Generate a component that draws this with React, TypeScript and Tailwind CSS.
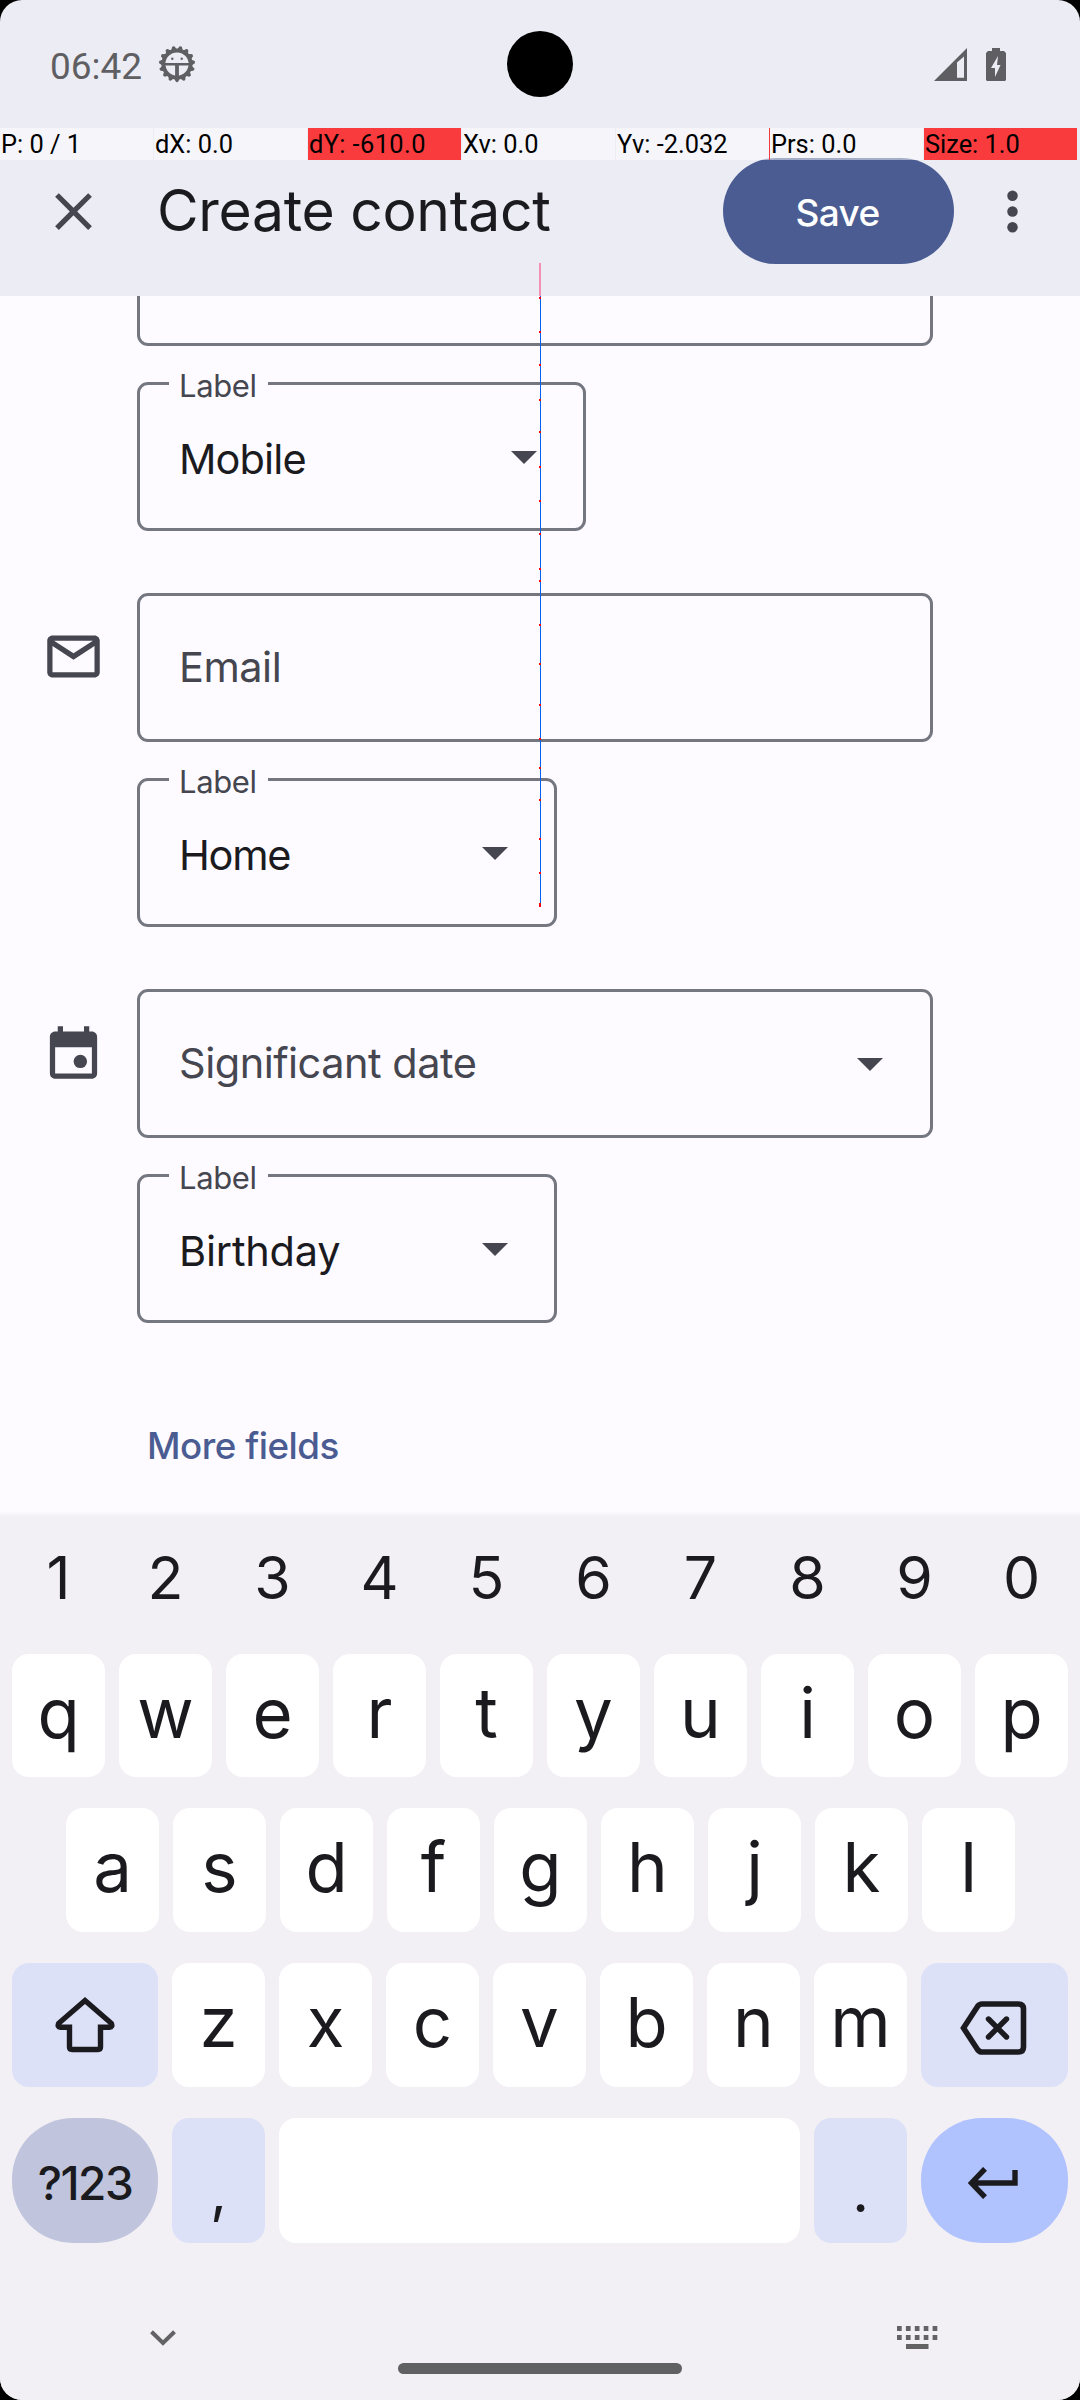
import type { ReactNode } from "react";

const pointerCells: { text: string; style: string }[] = [
  { text: "P: 0 / 1", style: "bg-white/50" },
  { text: "dX: 0.0", style: "bg-white/50" },
  { text: "dY: -610.0", style: "bg-[#ff0000]/75 tracking-[0.4px]" },
  { text: "Xv: 0.0", style: "bg-white/50" },
  { text: "Yv: -2.032", style: "bg-white/50" },
  { text: "Prs: 0.0", style: "bg-white/50" },
  { text: "Size: 1.0", style: "bg-[#ff0000]/75" },
];

const touchSamples = [
  297, 331, 364, 399, 431, 466, 500, 533, 568, 580, 624, 663, 704, 738, 767, 799, 838, 872,
];

function BugIcon() {
  const teeth = Array.from({ length: 15 }, (_, i) => i * 24 + 12);
  return (
    <svg className="h-[38px] w-[38px]" viewBox="-19 -19 38 38">
      <circle r="13.6" fill="none" stroke="#5f5f63" strokeWidth="4" />
      {teeth.map((a) => (
        <path
          key={a}
          d="M-2.8 -14.5 L-1.3 -17.6 Q0 -18.8 1.3 -17.6 L2.8 -14.5Z"
          fill="#5f5f63"
          transform={`rotate(${a})`}
        />
      ))}
      <path d="M-12.5 0.2H12.5" stroke="#5f5f63" strokeWidth="2.6" />
      <path d="M0 0V13" stroke="#5f5f63" strokeWidth="3.8" />
      <circle cx="-4.7" cy="-5.2" r="1.2" fill="#5f5f63" />
      <circle cx="4.7" cy="-5.2" r="1.2" fill="#5f5f63" />
    </svg>
  );
}

function StatusBar() {
  return (
    <div className="relative flex h-[128px] items-center pl-[50px] pr-[74px]">
      <span className="pt-[5px] font-['Roboto',sans-serif] text-[37px] leading-[44px] text-[#5f5f63]">06:42</span>
      <div className="ml-[16px]">
        <BugIcon />
      </div>
      <svg className="ml-auto h-[33px] w-[33px]" viewBox="0 0 33 33">
        <path fillRule="evenodd" d="M0 33L33 0V33ZM23 14.5V29.8H30V8.5Z" fill="#5f5f63" />
      </svg>
      <svg className="ml-[19px] h-[33px] w-[20px]" viewBox="0 0 20 33">
        <path
          fillRule="evenodd"
          d="M6 0h8v3h4l2 2v27l-1 1H1l-1-1V5l2-2h4ZM12 8L5 20h4v9L14.5 17H11Z"
          fill="#5f5f63"
        />
      </svg>
      <div className="absolute left-[507px] top-[31px] h-[66px] w-[66px] rounded-full bg-black" />
    </div>
  );
}

function PointerBar() {
  return (
    <div className="relative z-10 flex h-[32px] gap-px">
      {pointerCells.map((c, i) => (
        <div
          key={c.text}
          className={`relative w-[153px] pl-px font-['Roboto',sans-serif] text-[25.4px] leading-[32px] whitespace-nowrap text-black ${c.style}`}
        >
          {c.text}
          {i === 5 && <span className="absolute -left-px top-0 h-full w-px bg-[#f03a3c]" />}
        </div>
      ))}
    </div>
  );
}

function AppBar() {
  return (
    <div className="flex h-[136px] items-center pb-[34px] pl-[42px] pr-[36px]">
      <svg className="h-[63px] w-[63px] shrink-0" viewBox="0 0 24 24" fill="#45464f">
        <path d="M19 6.41L17.59 5 12 10.59 6.41 5 5 6.41 10.59 12 5 17.59 6.41 19 12 13.41 17.59 19 19 17.59 13.41 12z" />
      </svg>
      <h1 className="ml-[52px] text-[57px] leading-[64px] tracking-[-0.3px] text-[#1b1b1f]">Create contact</h1>
      <button className="ml-auto mr-[27px] flex h-[106px] w-[231px] shrink-0 items-center justify-center rounded-full bg-[#4a5c92] pr-[2px] pt-[4px] text-[37px] font-medium tracking-[-0.6px] text-white">
        Save
      </button>
      <svg className="h-[63px] w-[63px] shrink-0" viewBox="0 0 24 24" fill="#45464f">
        <circle cx="12" cy="6" r="2" />
        <circle cx="12" cy="12" r="2" />
        <circle cx="12" cy="18" r="2" />
      </svg>
    </div>
  );
}

function Arrow() {
  return (
    <svg className="mt-[2px] h-[13px] w-[26px]" viewBox="0 0 26 13">
      <path d="M0 0H26L13 13Z" fill="#45464f" />
    </svg>
  );
}

function Field({ text, arrow }: { text: string; arrow?: boolean }) {
  return (
    <div className="flex h-[149px] w-[796px] items-center justify-between rounded-[11px] border-[3px] border-[#757780] pl-[39px] pr-[47px]">
      <span className="text-[41.5px] tracking-[-0.5px] text-[#45464f]">{text}</span>
      {arrow && <Arrow />}
    </div>
  );
}

function LabelSelect({ value, width, tracking }: { value: string; width: string; tracking: string }) {
  return (
    <div
      className={`relative mt-[36px] flex h-[149px] items-center justify-between rounded-[11px] border-[3px] border-[#757780] pl-[39px] pr-[46px] ${width}`}
    >
      <span className="absolute -top-[19px] left-[29px] w-[99px] bg-[#fdfbff] pl-[10px] text-[31px] leading-[40px] tracking-[-0.4px] text-[#45464f]">
        Label
      </span>
      <span className={`pt-[6px] text-[41.5px] text-[#1b1b1f] ${tracking}`}>{value}</span>
      <Arrow />
    </div>
  );
}

function Group({ icon, children }: { icon?: ReactNode; children: ReactNode }) {
  return (
    <section className="flex">
      <div className="w-[137px] shrink-0 pl-[42px]">{icon}</div>
      <div>{children}</div>
    </section>
  );
}

function MailIcon() {
  return (
    <svg className="mt-[32px] h-[63px] w-[63px]" viewBox="0 0 24 24" fill="#45464f">
      <path
        fillRule="evenodd"
        d="M4 4H20C21.1 4 22 4.9 22 6V18C22 19.1 21.1 20 20 20H4C2.9 20 2 19.1 2 18V6C2 4.9 2.900 4 4 4ZM4.600 6L12 10.800L19.400 6ZM4 8V18H20V8L12 13.200Z"
      />
    </svg>
  );
}

function EventIcon() {
  return (
    <svg className="mt-[32px] h-[63px] w-[63px]" viewBox="0 0 24 24" fill="#45464f">
      <path
        fillRule="evenodd"
        d="M6 2h2v2h8V2h2v2h1c1.1 0 2 .9 2 2v14c0 1.1-.9 2-2 2H5c-1.1 0-2-.9-2-2V6c0-1.1.9-2 2-2h1ZM5 10v10h14V10Z"
      />
      <circle cx="14.6" cy="15.4" r="2.55" />
    </svg>
  );
}

function Form() {
  return (
    <main className="h-[1215px] bg-[#fdfbff]">
      <Group>
        <div className="h-[50px] w-[796px] rounded-b-[11px] border-[3px] border-t-0 border-[#757780]" />
        <LabelSelect value="Mobile" width="w-[449px]" tracking="tracking-[-0.9px]" />
      </Group>
      <div className="mt-[62px]">
        <Group icon={<MailIcon />}>
          <Field text="Email" />
          <LabelSelect value="Home" width="w-[420px]" tracking="tracking-[-1.3px]" />
        </Group>
      </div>
      <div className="mt-[62px]">
        <Group icon={<EventIcon />}>
          <Field text="Significant date" arrow />
          <LabelSelect value="Birthday" width="w-[420px]" tracking="tracking-[-0.2px]" />
        </Group>
      </div>
      <button className="ml-[147px] mt-[101px] block text-[36.75px] leading-[44px] font-medium tracking-[-0.5px] text-[#4a5c92]">
        More fields
      </button>
    </main>
  );
}

function Key({ children, className = "w-[93px] bg-white pb-[3px]" }: { children?: ReactNode; className?: string }) {
  return (
    <div className={`flex h-full shrink-0 items-center justify-center rounded-[17px] text-[69px] ${className}`}>
      {children}
    </div>
  );
}

function Keyboard() {
  return (
    <div className="bg-[#f2f0f5] text-[#1b1b1f]">
      <div className="h-[6px] bg-linear-to-b from-[#fdfbff] to-[#f2f0f5]" />
      <div className="flex h-[137px] items-center gap-[14px] px-[12px] pb-[14px]">
        {[..."1234567890"].map((d) => (
          <span key={d} className="w-[93px] text-center text-[59px]">{d}</span>
        ))}
      </div>
      <div className="flex flex-col gap-[31px] px-[12px]">
        <div className="flex h-[123px] gap-[14px]">
          {[..."qwertyuiop"].map((k) => <Key key={k}>{k}</Key>)}
        </div>
        <div className="flex h-[124px] gap-[14px] pl-[54px]">
          {[..."asdfghjkl"].map((k) => <Key key={k} className="w-[93px] bg-white pb-[4px]">{k}</Key>)}
        </div>
        <div className="flex h-[124px] gap-[14px]">
          <Key className="w-[146px] bg-[#dde1f8]">
            <svg className="h-[58px] w-[60px]" viewBox="0 0 60 58">
              <path
                d="M30 4.5L56.3 27.3Q58 31.2 54.5 31.2H45.5V51Q45.5 53.5 43 53.5H17Q14.500 53.500 14.500 51V31.200H5.500Q2 31.200 3.700 27.300Z"
                fill="none"
                stroke="#1b1b1f"
                strokeWidth="5.4"
                strokeLinejoin="miter"
              />
            </svg>
          </Key>
          {[..."zxcvbnm"].map((k) => <Key key={k} className="w-[93px] bg-white pb-[4px]">{k}</Key>)}
          <Key className="w-[147px] bg-[#dde1f8] pr-[2px] pt-[5px]">
            <svg className="h-[54px] w-[67px]" viewBox="0 0 67 54">
              <path
                d="M3.500 27L17.500 5.500Q19.300 3 22 3H58.500Q63.500 3 63.500 8V46Q63.500 51 58.500 51H22Q19.300 51 17.500 48.500Z"
                fill="none"
                stroke="#1b1b1f"
                strokeWidth="5.600"
              />
              <path d="M28.500 18L46.500 36M46.500 18L28.500 36" stroke="#1b1b1f" strokeWidth="5.400" strokeLinecap="round" />
            </svg>
          </Key>
        </div>
        <div className="flex h-[125px] gap-[14px]">
          <div className="flex w-[146px] shrink-0 items-center justify-center rounded-[61px] bg-[#c0c5dd] pt-[5px] text-[46px] font-medium tracking-[-1.500px]">
            ?123
          </div>
          <div className="flex w-[93px] shrink-0 items-center justify-center rounded-[17px] bg-[#dde1f8] pt-[22px] text-[58px]">,</div>
          <div className="w-[521px] shrink-0 rounded-[17px] bg-white" />
          <div className="flex w-[93px] shrink-0 items-center justify-center rounded-[17px] bg-[#dde1f8] pt-[22px] text-[58px]">.</div>
          <div className="flex w-[147px] shrink-0 items-center justify-center rounded-[61px] bg-[#b1c3fe] pr-[3px] pt-[5px]">
            <svg className="h-[32px] w-[50px]" viewBox="0 0 50 32">
              <path d="M47 3V16H4M17 1.800L3.500 16L17 30.200" fill="none" stroke="#1b1b1f" strokeWidth="5.400" />
            </svg>
          </div>
        </div>
      </div>
      <div className="mt-[83px] flex h-[24px] items-center justify-between pl-[150px] pr-[142px]">
        <svg className="h-[16px] w-[26px]" viewBox="0 0 26 16">
          <path d="M1.500 1.700L13 13L24.500 1.700" fill="none" stroke="#636366" strokeWidth="4" />
        </svg>
        <svg className="h-[24px] w-[41px]" viewBox="0 0 41 24" fill="#636366">
          {[0, 1, 2, 3, 4].map((i) => (
            <g key={i}>
              <rect x={i * 8.9} y="0" width="4.700" height="5" />
              <rect x={i * 8.9} y="9" width="4.700" height="5" />
            </g>
          ))}
          <rect x="9" y="18" width="22.500" height="5" />
        </svg>
      </div>
      <div className="mx-auto mt-[13px] h-[11px] w-[284px] rounded-full bg-[#616163]" />
      <div className="h-[26px]" />
    </div>
  );
}

function TouchTrail() {
  return (
    <div className="pointer-events-none absolute left-[539px] top-0 w-[2px]">
      <div className="absolute top-[263px] h-[33px] w-[2px] bg-[#f591b5]" />
      <div className="absolute left-px top-[296px] h-[609px] w-px bg-[#0060f0]" />
      {touchSamples.map((y) => (
        <div key={y} className="absolute h-[2px] w-[2px] bg-[#ff0010]" style={{ top: y }} />
      ))}
      <div className="absolute top-[903px] h-[4px] w-[2px] bg-[#ff0010]" />
    </div>
  );
}

export default function App() {
  return (
    <div className="h-[2400px] w-[1080px] bg-black font-['Inter',sans-serif]">
      <div className="relative h-full overflow-hidden rounded-[22px] bg-[#ececf4]">
        <StatusBar />
        <PointerBar />
        <AppBar />
        <Form />
        <Keyboard />
        <TouchTrail />
      </div>
    </div>
  );
}
